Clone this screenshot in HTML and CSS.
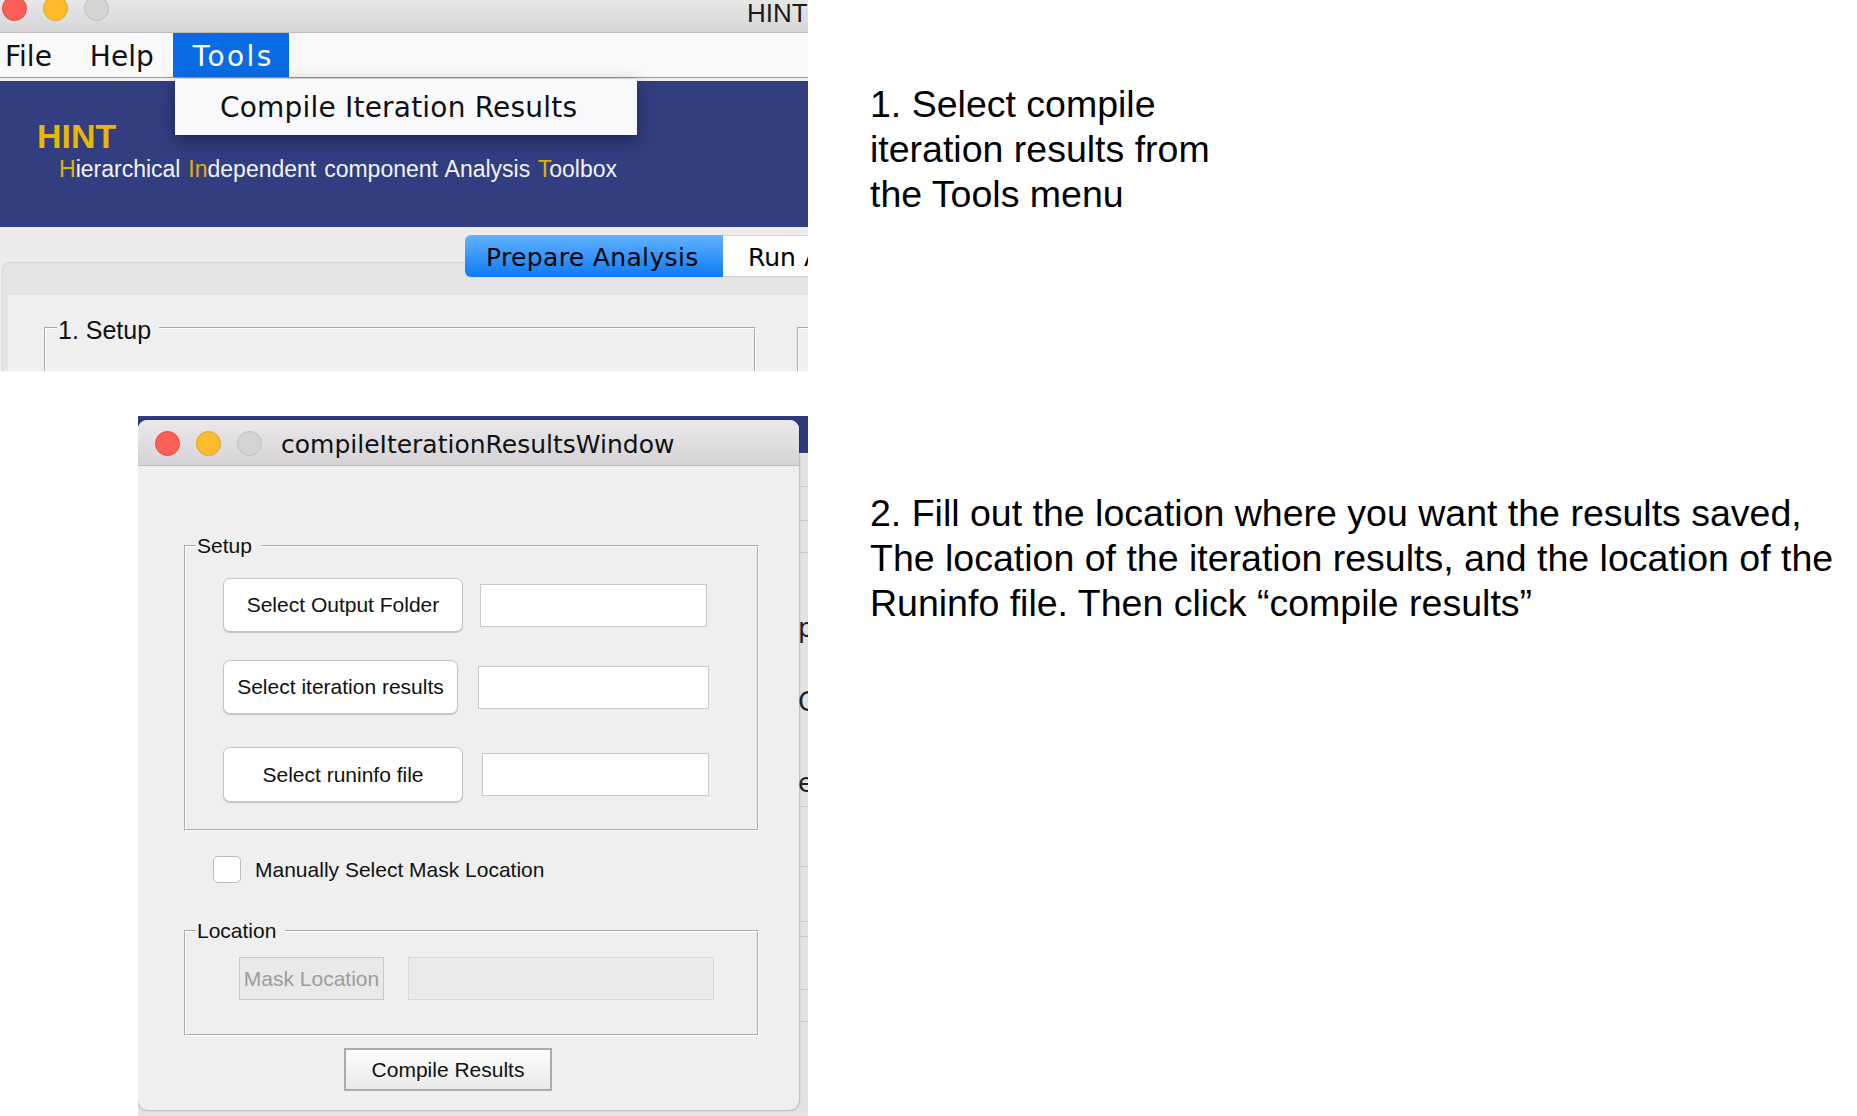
FILE: index.html
```html
<!DOCTYPE html>
<html lang="en">
<head>
<meta charset="utf-8">
<title>HINT - Compile Iteration Results</title>
<link rel="stylesheet" href="styles.css">
</head>
<body>
<main class="slide">
  <section class="shot shot-main">
    <div class="mac-title">
      <div class="lights lights-cut">
        <span class="light red"></span><span class="light yellow"></span><span class="light gray"></span>
      </div>
      <span class="mac-title-text">HINT</span>
    </div>
    <nav class="menubar">
      <span class="menu-item first">File</span>
      <span class="menu-item">Help</span>
      <span class="menu-item active">Tools</span>
    </nav>
    <div class="menu-gap"></div>
    <header class="banner">
      <div class="banner-title">HINT</div>
      <div class="banner-sub"><span class="hl">H</span>ierarchical <span class="hl">In</span>dependent component Analysis <span class="hl">T</span>oolbox</div>
    </header>
    <div class="dropdown">Compile Iteration Results</div>
    <div class="tab-area">
      <div class="tabs">
        <span class="tab tab-active">Prepare Analysis</span>
        <span class="tab tab-plain">Run Analysis</span>
      </div>
      <div class="tab-panel">
        <div class="tab-inner">
          <fieldset class="group group-main"><legend class="legend-lg">1. Setup</legend></fieldset>
          <fieldset class="group group-next"></fieldset>
        </div>
      </div>
    </div>
  </section>

  <div class="note note-1">1. Select compile<br>iteration results from<br>the Tools menu</div>

  <section class="shot shot-dialog">
    <div class="dialog-row">
      <div class="window">
        <div class="win-title">
          <div class="lights">
            <span class="light red"></span><span class="light yellow"></span><span class="light gray"></span>
          </div>
          <span class="win-title-text">compileIterationResultsWindow</span>
        </div>
        <div class="win-body">
          <fieldset class="group group-setup"><legend class="legend-sm">Setup</legend>
            <div class="group-body setup-body">
              <div class="pick-row">
                <button class="pick-btn w240">Select Output Folder</button>
                <span class="field f1"></span>
              </div>
              <div class="pick-row r2">
                <button class="pick-btn w235">Select iteration results</button>
                <span class="field f2"></span>
              </div>
              <div class="pick-row r3">
                <button class="pick-btn w240 h55">Select runinfo file</button>
                <span class="field f3"></span>
              </div>
            </div>
          </fieldset>
          <label class="check-row"><span class="checkbox"></span>Manually Select Mask Location</label>
          <fieldset class="group group-location"><legend class="legend-sm">Location</legend>
            <div class="group-body location-body">
              <div class="pick-row">
                <span class="btn-disabled">Mask Location</span>
                <span class="field field-disabled"></span>
              </div>
            </div>
          </fieldset>
          <div class="compile-row"><button class="compile-btn">Compile Results</button></div>
        </div>
      </div>
      <div class="behind-strip">
        <div class="strip-blank"></div>
        <div class="strip-cell c34"></div>
        <div class="strip-cell c34"></div>
        <div class="strip-cell c32"></div>
        <div class="strip-glyphs">
          <span class="g-p">po</span>
          <span class="g-c">Co</span>
          <span class="g-e">ea</span>
        </div>
        <div class="strip-cell c16"></div>
        <div class="strip-cell c60"></div>
        <div class="strip-cell c55"></div>
        <div class="strip-cell c15"></div>
        <div class="strip-cell c53"></div>
        <div class="strip-cell c32"></div>
      </div>
    </div>
  </section>

  <div class="note note-2">2. Fill out the location where you want the results saved,<br>The location of the iteration results, and the location of the<br>Runinfo file. Then click “compile results”</div>
</main>
</body>
</html>
```

FILE: styles.css
```css
* { box-sizing: border-box; }

html, body {
  margin: 0;
  padding: 0;
  background: #ffffff;
}

body {
  width: 1857px;
  height: 1116px;
  overflow: hidden;
  font-family: "Liberation Sans", Arial, sans-serif;
  color: #000;
}

.slide {
  display: grid;
  grid-template-columns: 808px 1fr;
  grid-template-rows: 371px 700px;
  column-gap: 62px;
  row-gap: 45px;
}

/* ---------- annotations ---------- */
.note {
  font-family: "Liberation Sans", Arial, sans-serif;
  font-size: 37.5px;
  line-height: 45px;
  white-space: nowrap;
  color: #000;
}
.note-1 { padding-top: 82px; }
.note-2 { padding-top: 75px; }

/* ---------- shared ---------- */
.shot {
  position: relative;
  overflow: hidden;
}

.lights {
  display: flex;
  gap: 16px;
  flex: none;
}
.light {
  width: 25px;
  height: 25px;
  border-radius: 50%;
  border: 1px solid;
  flex: none;
}
.red { background: #fc5f57; border-color: #df4a43; }
.yellow { background: #fdbc2e; border-color: #dfa326; }
.gray { background: #d5d4d5; border-color: #c0bfc0; }

.group {
  margin: 0;
  padding: 0;
  min-width: 0;
  border: 2px groove #ffffff;
}
.group legend {
  color: #111;
  font-family: "Liberation Sans", Arial, sans-serif;
}
.legend-lg {
  font-size: 25px;
  line-height: 26px;
  padding: 4px 8px 0 1px;
  margin-left: 11px;
}
.legend-sm {
  font-size: 21px;
  line-height: 22px;
  padding: 0 9px 0 1px;
  margin-left: 10px;
}

/* ---------- main HINT window ---------- */
.shot-main {
  height: 371px;
  background: #ececec;
}

.mac-title {
  display: flex;
  align-items: flex-start;
  height: 33px;
  background: linear-gradient(#e8e7e8, #d7d6d7);
  border-bottom: 1px solid #bdbcbd;
  overflow: hidden;
}
.lights-cut {
  margin-top: -4px;
  padding-left: 2px;
}
.mac-title-text {
  margin-left: 638px;
  margin-top: -2px;
  font-family: "Liberation Sans", Arial, sans-serif;
  font-size: 26px;
  line-height: 30px;
  color: #1a1a1a;
  white-space: nowrap;
}

.menubar {
  display: flex;
  height: 45px;
  background: #f9f9f9;
  border-bottom: 1px solid #9b9b9b;
  font-family: "DejaVu Sans", Verdana, sans-serif;
  font-size: 28px;
}
.menu-item {
  height: 44px;
  padding: 3px 19px 0;
  line-height: 41px;
  color: #111;
}
.menu-item.first { padding-left: 5px; }
.menu-item.active {
  width: 116px;
  padding-left: 20px;
  background: #0a6ce4;
  color: #fff;
  letter-spacing: 2.4px;
}

.menu-gap {
  height: 3px;
  background: #f2f2f2;
}

.banner {
  height: 146px;
  background: #323e80;
  padding: 35px 0 0 37px;
}
.banner-title {
  font-family: "Liberation Sans", Arial, sans-serif;
  font-weight: bold;
  font-size: 34px;
  line-height: 40px;
  color: #e8b700;
}
.banner-sub {
  margin-left: 22px;
  font-family: "Liberation Sans", Arial, sans-serif;
  font-size: 23px;
  line-height: 26px;
  word-spacing: 1.5px;
  color: #f3f3f6;
  white-space: nowrap;
}
.hl { color: #e3b200; }

.dropdown {
  position: absolute;
  left: 175px;
  top: 79px;
  width: 462px;
  height: 56px;
  padding: 1px 0 0 45px;
  background: #f9f9fb;
  font-family: "DejaVu Sans", Verdana, sans-serif;
  font-size: 28px;
  letter-spacing: 0.2px;
  line-height: 55px;
  color: #111;
  box-shadow: 0 6px 18px rgba(0, 0, 0, 0.38), 0 0 2px rgba(0, 0, 0, 0.2);
  white-space: nowrap;
}

.tab-area {
  padding-top: 8px;
  background: #ececec;
}
.tabs {
  position: relative;
  z-index: 1;
  display: flex;
  height: 42px;
  padding-left: 465px;
  white-space: nowrap;
  font-family: "DejaVu Sans", Verdana, sans-serif;
  font-size: 25px;
}
.tab {
  flex: none;
  height: 42px;
  padding-top: 4px;
  line-height: 38px;
  color: #000;
}
.tab-active {
  width: 258px;
  padding-left: 21px;
  letter-spacing: 0.35px;
  border-radius: 6px 0 0 6px;
  background: linear-gradient(#62b3fd, #0d7af5);
}
.tab-plain {
  width: 200px;
  padding-left: 25px;
  background: #ffffff;
  border-top: 1px solid #dadada;
  border-bottom: 1px solid #d0d0d0;
  padding-top: 3px;
}

.tab-panel {
  margin-top: -15px;
  margin-left: 2px;
  padding: 32px 0 0 5px;
  background: #e4e4e4;
  border-top: 1px solid #d8d8d8;
  border-left: 1px solid #d8d8d8;
  border-top-left-radius: 8px;
}
.tab-inner {
  display: flex;
  align-items: flex-start;
  height: 120px;
  padding-left: 36px;
  background: #efefef;
}
.group-main {
  flex: none;
  width: 712px;
  height: 160px;
  margin-top: 18px;
}
.group-next {
  flex: none;
  width: 200px;
  height: 160px;
  margin-top: 32px;
  margin-left: 41px;
}

/* ---------- dialog window ---------- */
.shot-dialog {
  margin-left: 138px;
  height: 700px;
  background: linear-gradient(#2f3b7d 0 37px, #e3e3e3 37px);
}
.dialog-row {
  display: flex;
  align-items: flex-start;
  padding-top: 4px;
}
.window {
  flex: none;
  width: 661px;
  height: 690px;
  border-radius: 9px;
  background: #efefef;
  overflow: hidden;
  box-shadow: 0 0 2px rgba(0, 0, 0, 0.55);
}
.win-title {
  display: flex;
  align-items: center;
  height: 46px;
  padding-left: 17px;
  background: linear-gradient(#ebe9eb, #d5d3d5);
  border-bottom: 1px solid #b8b7b8;
}
.win-title .lights { margin-top: 2px; }
.win-title-text {
  margin-left: 19px;
  padding-top: 4px;
  font-family: "DejaVu Sans", Verdana, sans-serif;
  font-size: 25px;
  color: #111;
  white-space: nowrap;
}

.win-body {
  padding: 0 0 18px 46px;
  font-family: "Liberation Sans", Arial, sans-serif;
  font-size: 21px;
  color: #111;
}

.group-setup {
  width: 575px;
  margin-top: 69px;
}
.setup-body {
  padding: 21px 0 27px 37px;
}
.pick-row {
  display: flex;
  align-items: center;
}
.r2 { margin-top: 28px; }
.r3 { margin-top: 33px; }

.pick-btn {
  flex: none;
  height: 54px;
  padding: 0;
  border: 1px solid #c4c4c4;
  border-radius: 7px;
  background: #ffffff;
  box-shadow: 0 1px 1px rgba(0, 0, 0, 0.18);
  font-family: "Liberation Sans", Arial, sans-serif;
  font-size: 21px;
  color: #111;
  text-align: center;
  white-space: nowrap;
}
.w240 { width: 240px; }
.w235 { width: 235px; }
.h55 { height: 55px; }

.field {
  flex: none;
  height: 43px;
  background: #ffffff;
  border: 1px solid #c9c9c9;
}
.f1 { width: 227px; margin-left: 17px; }
.f2 { width: 231px; margin-left: 20px; }
.f3 { width: 227px; margin-left: 19px; }

.check-row {
  display: flex;
  align-items: center;
  gap: 14px;
  margin: 25px 0 0 29px;
  line-height: 27px;
  white-space: nowrap;
}
.checkbox {
  flex: none;
  width: 28px;
  height: 27px;
  border-radius: 5px;
  background: #ffffff;
  border: 1px solid #bcbcbc;
}

.group-location {
  width: 575px;
  margin-top: 37px;
}
.location-body {
  padding: 15px 0 34px 53px;
}
.btn-disabled {
  flex: none;
  width: 145px;
  height: 43px;
  line-height: 41px;
  text-align: center;
  background: #e9e9e9;
  border: 1px solid #c9c9c9;
  color: #9c9c9c;
  white-space: nowrap;
}
.field-disabled {
  width: 306px;
  margin-left: 24px;
  background: #ebebeb;
  border-color: #d8d8d8;
}

.compile-row {
  display: flex;
  margin-top: 12px;
  padding-left: 160px;
}
.compile-btn {
  width: 208px;
  height: 43px;
  padding: 0;
  border: 2px solid #aaaaaa;
  background: linear-gradient(#fdfdfd, #e9e9e9);
  font-family: "Liberation Sans", Arial, sans-serif;
  font-size: 21px;
  color: #111;
  white-space: nowrap;
}

/* sliver of the main window visible behind the dialog */
.behind-strip {
  flex: 1;
  overflow: hidden;
  display: flex;
  flex-direction: column;
}
.strip-blank { height: 33px; flex: none; }
.strip-cell { flex: none; border-bottom: 1px solid #c9c9c9; }
.c34 { height: 34px; }
.c32 { height: 32px; }
.c16 { height: 16px; }
.c60 { height: 60px; }
.c55 { height: 55px; }
.c15 { height: 15px; }
.c53 { height: 53px; }
.strip-glyphs {
  flex: none;
  display: flex;
  flex-direction: column;
  height: 238px;
  padding-top: 60px;
  margin-left: -1px;
  font-family: "DejaVu Sans", Verdana, sans-serif;
  font-size: 26px;
  line-height: 30px;
  white-space: nowrap;
  color: #222;
}
.g-c { margin-top: 44px; }
.g-e { margin-top: 51px; }
```
